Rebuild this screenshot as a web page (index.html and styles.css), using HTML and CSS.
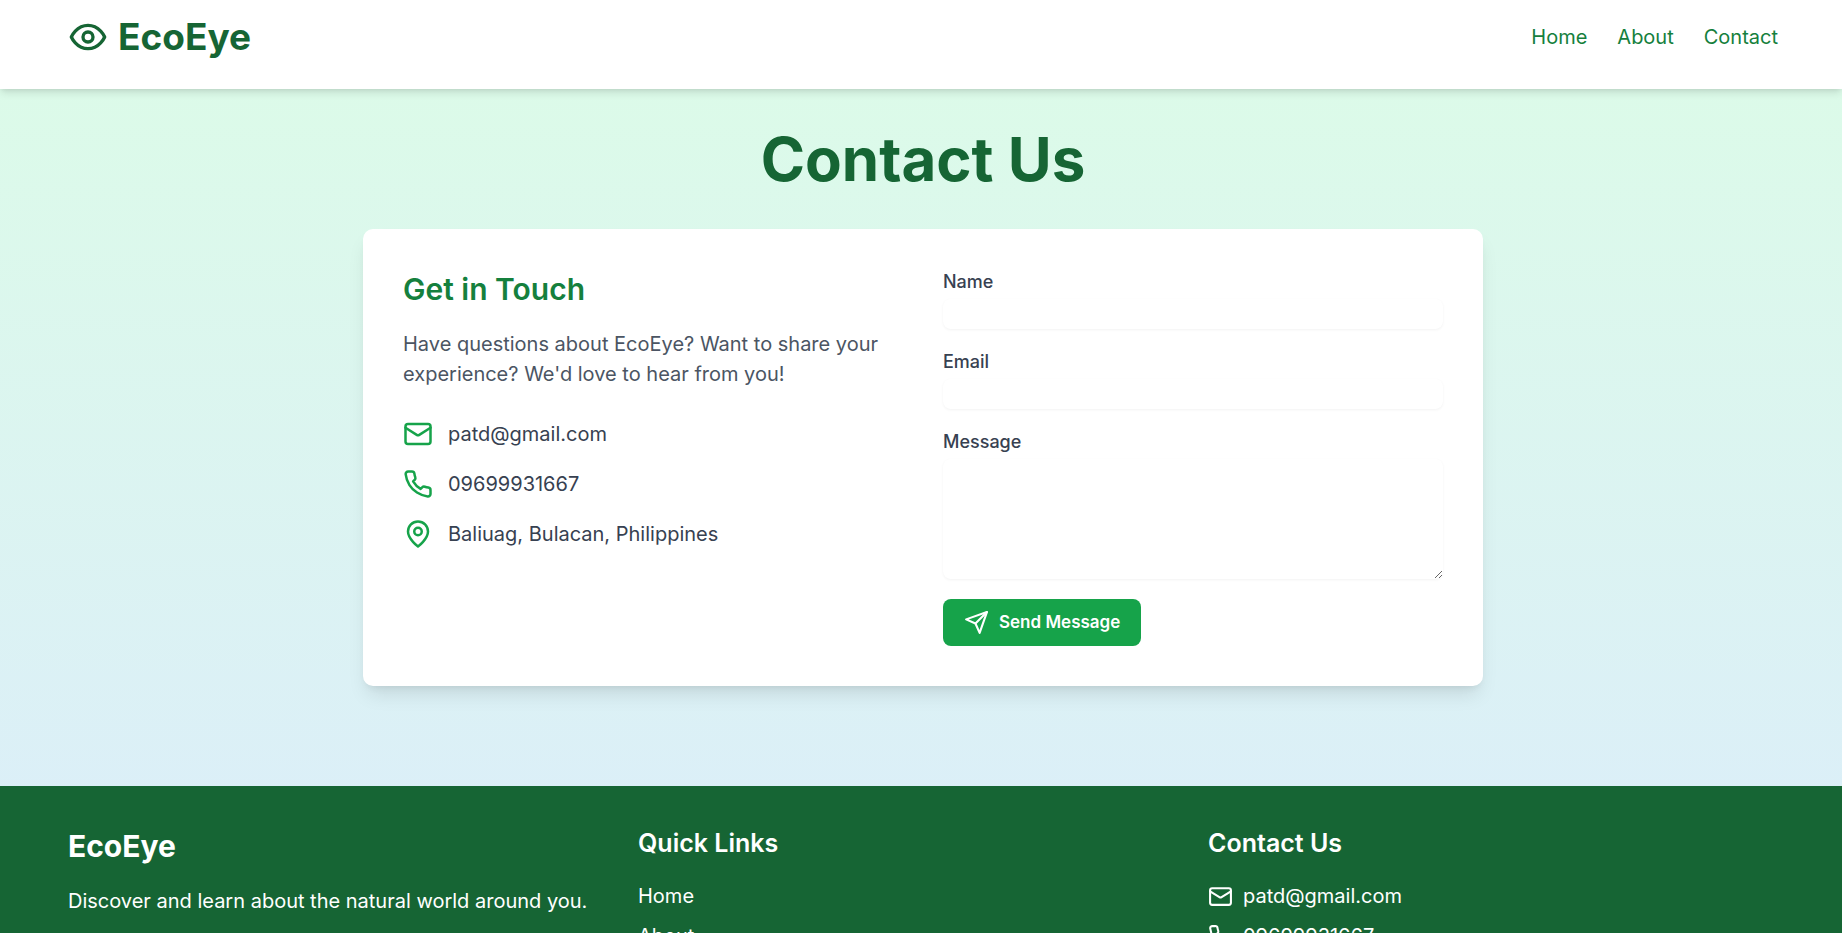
FILE: index.html
```html
<!DOCTYPE html>
<html lang="en">
<head>
  <meta charset="utf-8">
  <meta name="viewport" content="width=device-width, initial-scale=1">
  <title>EcoEye - Contact Us</title>
  <link rel="stylesheet" href="styles.css">
</head>
<body>
  <svg class="sprite" aria-hidden="true">
    <symbol id="icon-mail" viewBox="0 0 24 24"><rect width="20" height="16" x="2" y="4" rx="2"/><path d="m22 7-8.97 5.7a1.94 1.94 0 0 1-2.06 0L2 7"/></symbol>
    <symbol id="icon-phone" viewBox="0 0 24 24"><path d="M22 16.92v3a2 2 0 0 1-2.18 2 19.79 19.79 0 0 1-8.63-3.07 19.5 19.5 0 0 1-6-6 19.79 19.79 0 0 1-3.07-8.67A2 2 0 0 1 4.11 2h3a2 2 0 0 1 2 1.72 12.84 12.84 0 0 0 .7 2.81 2 2 0 0 1-.45 2.11L8.09 9.91a16 16 0 0 0 6 6l1.27-1.27a2 2 0 0 1 2.11-.45 12.84 12.84 0 0 0 2.81.7A2 2 0 0 1 22 16.92z"/></symbol>
    <symbol id="icon-pin" viewBox="0 0 24 24"><path d="M20 10c0 6-8 12-8 12s-8-6-8-12a8 8 0 0 1 16 0Z"/><circle cx="12" cy="10" r="3"/></symbol>
  </svg>

  <header class="header">
    <div class="container header-row">
      <a class="logo" href="#">
        <svg class="icon icon-lg" viewBox="0 0 24 24" aria-hidden="true"><path d="M2 12s3-7 10-7 10 7 10 7-3 7-10 7-10-7-10-7Z"/><circle cx="12" cy="12" r="3"/></svg>
        <span>EcoEye</span>
      </a>
      <nav class="nav" aria-label="Main">
        <a href="#">Home</a>
        <a href="#">About</a>
        <a href="#">Contact</a>
      </nav>
    </div>
  </header>

  <main class="main">
    <h1 class="title">Contact Us</h1>
    <div class="card">
      <section class="info">
        <h2 class="info-title">Get in Touch</h2>
        <p class="info-text">Have questions about EcoEye? Want to share your experience? We'd love to hear from you!</p>
        <ul class="info-list">
          <li><svg class="icon icon-md" aria-hidden="true"><use href="#icon-mail"/></svg><span>patd@gmail.com</span></li>
          <li><svg class="icon icon-md" aria-hidden="true"><use href="#icon-phone"/></svg><span>09699931667</span></li>
          <li><svg class="icon icon-md" aria-hidden="true"><use href="#icon-pin"/></svg><span>Baliuag, Bulacan, Philippines</span></li>
        </ul>
      </section>
      <form class="form">
        <div class="field">
          <label for="name">Name</label>
          <input class="control" type="text" id="name" name="name">
        </div>
        <div class="field">
          <label for="email">Email</label>
          <input class="control" type="email" id="email" name="email">
        </div>
        <div class="field">
          <label for="message">Message</label>
          <textarea class="control" id="message" name="message" rows="4"></textarea>
        </div>
        <button class="send" type="submit">
          <svg class="icon icon-sm" viewBox="0 0 24 24" aria-hidden="true"><path d="m22 2-7 20-4-9-9-4Z"/><path d="M22 2 11 13"/></svg>
          <span>Send Message</span>
        </button>
      </form>
    </div>
  </main>

  <footer class="footer">
    <div class="container footer-grid">
      <section>
        <h2 class="footer-brand">EcoEye</h2>
        <p>Discover and learn about the natural world around you.</p>
      </section>
      <section>
        <h3 class="footer-title">Quick Links</h3>
        <ul class="footer-list">
          <li><a href="#">Home</a></li>
          <li><a href="#">About</a></li>
          <li><a href="#">Contact</a></li>
        </ul>
      </section>
      <section>
        <h3 class="footer-title">Contact Us</h3>
        <ul class="footer-list">
          <li><svg class="icon icon-sm" aria-hidden="true"><use href="#icon-mail"/></svg><span>patd@gmail.com</span></li>
          <li><svg class="icon icon-sm" aria-hidden="true"><use href="#icon-phone"/></svg><span>09699931667</span></li>
          <li><svg class="icon icon-sm" aria-hidden="true"><use href="#icon-pin"/></svg><span>Baliuag, Bulacan, Philippines</span></li>
        </ul>
      </section>
    </div>
  </footer>
</body>
</html>
```
FILE: styles.css
```css
*,
*::before,
*::after {
  box-sizing: border-box;
}

body {
  margin: 0;
  font-family: Inter, "Liberation Sans", sans-serif;
  font-size: 20px;
  line-height: 30px;
  background: linear-gradient(to bottom, #dcfce7, #dbeafe);
}

h1, h2, h3, p, ul {
  margin: 0;
  padding: 0;
}

ul {
  list-style: none;
}

a {
  color: inherit;
  text-decoration: none;
}

.sprite {
  display: none;
}

.icon {
  flex: none;
  fill: none;
  stroke: currentColor;
  stroke-width: 2;
  stroke-linecap: round;
  stroke-linejoin: round;
}

.icon-sm { width: 25px; height: 25px; }
.icon-md { width: 30px; height: 30px; }
.icon-lg { width: 40px; height: 40px; }

.header,
.main,
.footer {
  padding-left: 4px;
}

.container {
  max-width: 1750px;
  margin: 0 auto;
  padding: 0 20px;
}

.header {
  position: relative;
  padding-top: 14px;
  padding-bottom: 30px;
  background: #fff;
  box-shadow: 0 5px 8px -1px rgba(0, 0, 0, 0.1), 0 2px 5px -2px rgba(0, 0, 0, 0.1);
}

.header-row {
  display: flex;
  align-items: center;
  justify-content: space-between;
}

.logo {
  display: flex;
  align-items: center;
  gap: 10px;
  font-size: 37px;
  line-height: 45px;
  font-weight: 700;
  color: #166534;
}

.nav {
  display: flex;
  gap: 30px;
  color: #15803d;
}

.main {
  padding-top: 40px;
  padding-bottom: 100px;
}

.title {
  margin-bottom: 40px;
  font-size: 60px;
  line-height: 60px;
  font-weight: 700;
  text-align: center;
  color: #166534;
}

.card {
  display: grid;
  grid-template-columns: 1fr 1fr;
  gap: 40px;
  max-width: 1120px;
  margin: 0 auto;
  padding: 40px;
  background: #fff;
  border-radius: 10px;
  box-shadow: 0 12px 19px -4px rgba(0, 0, 0, 0.1), 0 5px 8px -5px rgba(0, 0, 0, 0.1);
}

.info-title {
  margin-bottom: 20px;
  font-size: 30px;
  line-height: 40px;
  font-weight: 600;
  color: #15803d;
}

.info-text {
  margin-bottom: 30px;
  color: #4b5563;
}

.info-list {
  display: grid;
  gap: 20px;
  color: #374151;
}

.info-list li {
  display: flex;
  align-items: center;
  gap: 15px;
}

.info-list .icon {
  color: #16a34a;
}

.form {
  display: flex;
  flex-direction: column;
  align-items: flex-start;
  gap: 20px;
}

.field {
  display: flex;
  flex-direction: column;
  gap: 5px;
  width: 100%;
  font-size: 18px;
  line-height: 25px;
  font-weight: 500;
  color: #374151;
}

.control {
  width: 100%;
  height: 30px;
  padding: 0;
  border: 0;
  border-radius: 8px;
  background: #fff;
  box-shadow: 0 1px 3px 0 rgba(0, 0, 0, 0.05);
  font: inherit;
  color: inherit;
}

textarea.control {
  height: 120px;
  resize: vertical;
}

.send {
  display: inline-flex;
  align-items: center;
  gap: 10px;
  padding: 10px 20px;
  border: 1px solid transparent;
  border-radius: 8px;
  background: #16a34a;
  font-family: inherit;
  font-size: 17px;
  line-height: 25px;
  font-weight: 600;
  color: #fff;
}

.footer {
  padding-top: 40px;
  padding-bottom: 120px;
  background: #166534;
  color: #fff;
}

.footer-grid {
  display: grid;
  grid-template-columns: repeat(3, 1fr);
}

.footer-brand {
  margin-bottom: 20px;
  font-size: 30px;
  line-height: 40px;
  font-weight: 700;
}

.footer-title {
  margin-bottom: 20px;
  font-size: 25px;
  line-height: 35px;
  font-weight: 600;
}

.footer-list {
  display: grid;
  gap: 10px;
}

.footer-list li {
  display: flex;
  align-items: center;
  gap: 10px;
}

@media (max-width: 900px) {
  .card,
  .footer-grid {
    grid-template-columns: 1fr;
    gap: 40px;
  }
}
```
